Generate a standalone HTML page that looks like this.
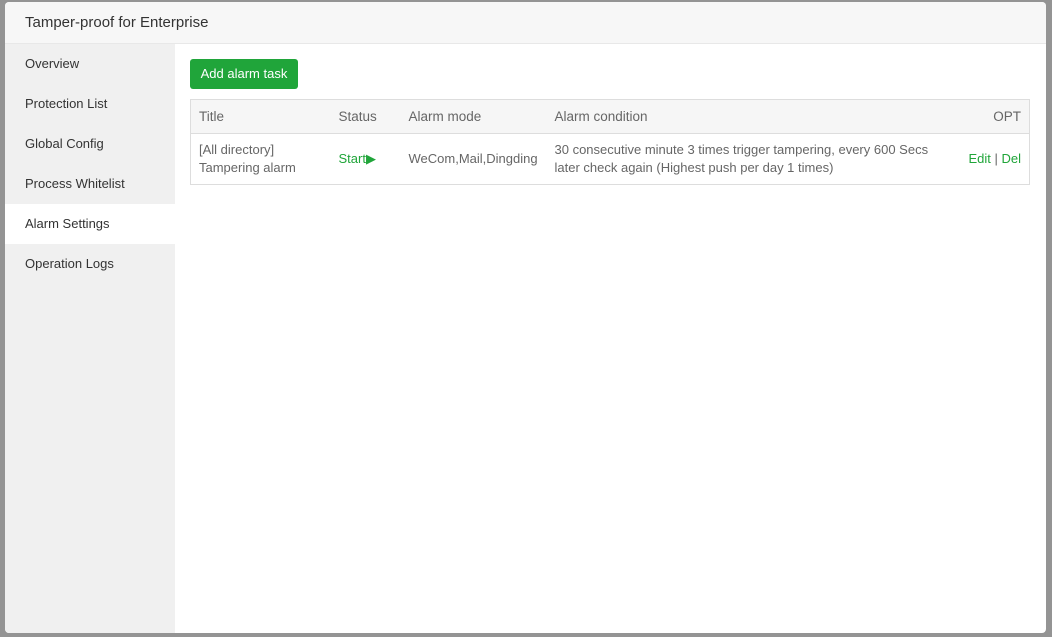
<!DOCTYPE html>
<html><head><style>
*{margin:0;padding:0;box-sizing:border-box}
body{width:1052px;height:637px;background:#949494;font-family:"Liberation Sans",sans-serif;position:relative;overflow:hidden}
.m{position:absolute;left:5px;top:2px;width:1041px;height:631px;background:#fff;border-radius:4px;overflow:hidden}
.h{height:42px;background:#f7f7f7;border-bottom:1px solid #e8e8e8;padding-left:20px;line-height:42px;font-size:15px;color:#333}
.s{position:absolute;left:0;top:42px;width:170px;bottom:0;background:#f0f0f0}
.s div{height:40px;line-height:40px;padding-left:20px;font-size:13px;color:#333}
.s .a{background:#fff}
.btn{position:absolute;left:185px;top:57px;width:108px;height:30px;background:#20a53a;color:#fff;border-radius:3px;font-size:13px;line-height:30px;text-align:center}
table{position:absolute;left:185px;top:97px;width:840px;border-collapse:collapse;border:1px solid #ddd;font-size:13px;color:#666}
th{background:#f6f6f6;font-weight:normal;text-align:left;height:34px;padding:0 8px;border-bottom:1px solid #ddd;font-size:13.5px}
td{height:51px;padding:0 8px;line-height:18px}
.g{color:#20a53a}
</style></head><body>
<div class="m">
<div class="h">Tamper-proof for Enterprise</div>
<div class="s"><div>Overview</div><div>Protection List</div><div>Global Config</div><div>Process Whitelist</div><div class="a">Alarm Settings</div><div>Operation Logs</div></div>
<div class="btn">Add alarm task</div>
<table><tr><th style="width:140px">Title</th><th style="width:70px">Status</th><th style="width:146px">Alarm mode</th><th>Alarm condition</th><th style="text-align:right">OPT</th></tr>
<tr><td>[All directory]<br>Tampering alarm</td><td class="g">Start&#9654;</td><td>WeCom,Mail,Dingding</td><td>30 consecutive minute 3 times trigger tampering, every 600 Secs<br>later check again (Highest push per day 1 times)</td><td style="text-align:right"><span class="g">Edit</span> | <span class="g">Del</span></td></tr></table>
</div>
</body></html>
